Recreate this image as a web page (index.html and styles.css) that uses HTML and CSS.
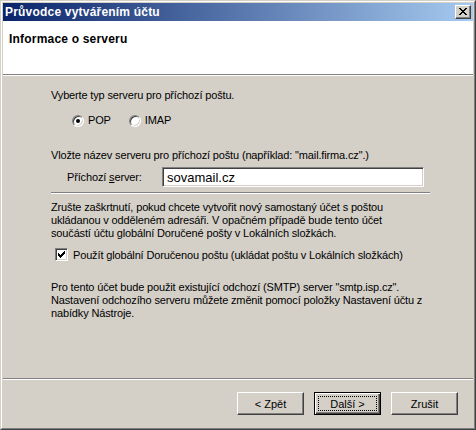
FILE: index.html
```html
<!DOCTYPE html>
<html lang="cs">
  <head>
    <meta charset="UTF-8" />
    <meta name="viewport" content="width=device-width, initial-scale=1.0" />
    <title>Průvodce vytvářením účtu</title>
    <link rel="stylesheet" href="styles.css">
  </head>
  <body>
    <div class="window">
      <div class="frame">
        <div class="titlebar">
          <span class="title">Průvodce vytvářením účtu</span>
          <button class="close" aria-label="Zavřít">
            <svg width="8" height="7" viewBox="0 0 8 7" shape-rendering="crispEdges">
              <path d="M0 0h2v1h-2zM6 0h2v1h-2zM1 1h2v1h-2zM5 1h2v1h-2zM2 2h4v1h-4zM3 3h2v1h-2zM2 4h4v1h-4zM1 5h2v1h-2zM5 5h2v1h-2zM0 6h2v1h-2zM6 6h2v1h-2z" fill="#000"/>
            </svg>
          </button>
        </div>

        <div class="header">
          <h1>Informace o serveru</h1>
        </div>
        <div class="etched"></div>

        <div class="content">
          <p class="line">Vyberte typ serveru pro příchozí poštu.</p>

          <div class="radios">
            <label class="radio">
              <span class="radio-box checked"></span>POP
            </label>
            <label class="radio">
              <span class="radio-box"></span>IMAP
            </label>
          </div>

          <p class="line gap-server">Vložte název serveru pro příchozí poštu (například: "mail.firma.cz".)</p>

          <div class="server-row">
            <label class="server-label" for="server">Příchozí <u>s</u>erver:</label>
            <div class="field"><input id="server" type="text" value="sovamail.cz" /></div>
          </div>

          <div class="etched short"></div>

          <p class="para">Zrušte zaškrtnutí, pokud chcete vytvořit nový samostaný účet s poštou<br>ukládanou v odděleném adresáři. V opačném případě bude tento účet<br>součástí účtu globální Doručené pošty v Lokálních složkách.</p>

          <label class="check">
            <span class="check-box">
              <svg width="7" height="7" viewBox="0 0 7 7" shape-rendering="crispEdges">
                <path d="M6 0h1v3h-1zM5 1h1v3h-1zM4 2h1v3h-1zM3 3h1v3h-1zM2 4h1v3h-1zM1 3h1v3h-1zM0 2h1v3h-1z" fill="#000"/>
              </svg>
            </span>Použít globální Doručenou poštu (ukládat poštu v Lokálních složkách)
          </label>

          <p class="para gap-smtp">Pro tento účet bude použit existující odchozí (SMTP) server "smtp.isp.cz".<br>Nastavení odchozího serveru můžete změnit pomocí položky Nastavení účtu z<br>nabídky Nástroje.</p>
        </div>

        <div class="etched"></div>
        <div class="footer">
          <button class="btn">&lt; Zpět</button>
          <button class="btn default"><span class="focus">Další &gt;</span></button>
          <button class="btn">Zrušit</button>
        </div>
      </div>
    </div>
  </body>
</html>
```

FILE: styles.css
```css
* {
  box-sizing: border-box;
}
body {
  margin: 0;
  width: 476px;
  height: 430px;
  background-color: #d4d0c8;
  font-family: "Liberation Sans", Arial, sans-serif;
  font-size: 11px;
  letter-spacing: -0.15px;
  color: #000;
}
.window {
  width: 476px;
  height: 430px;
  border: 1px solid;
  border-color: #d4d0c8 #404040 #404040 #d4d0c8;
}
.frame {
  height: 100%;
  display: flex;
  flex-direction: column;
  border: 1px solid;
  border-color: #fff #808080 #808080 #fff;
  padding: 1px;
}
.titlebar {
  height: 18px;
  flex: none;
  display: flex;
  align-items: center;
  justify-content: space-between;
  padding: 0 2px 0 2px;
  background: linear-gradient(to right, #0a246a, #a6caf0);
}
.title {
  color: #fff;
  font-weight: bold;
  font-size: 12px;
  letter-spacing: 0.2px;
}
.close {
  width: 16px;
  height: 14px;
  padding: 0;
  display: flex;
  align-items: center;
  justify-content: center;
  background: #d4d0c8;
  border: 1px solid;
  border-color: #fff #404040 #404040 #fff;
  box-shadow: inset -1px -1px 0 #808080;
}
.close svg {
  display: block;
  margin-bottom: 1px;
}
.header {
  height: 53px;
  flex: none;
  background: #fff;
  padding: 12px 0 0 6px;
}
.header h1 {
  margin: 0;
  font-size: 12px;
  line-height: 13px;
  font-weight: bold;
  letter-spacing: 0.2px;
}
.etched {
  height: 2px;
  flex: none;
  border-top: 1px solid #808080;
  border-bottom: 1px solid #fff;
}
.etched.short {
  width: 379px;
  margin-top: 5px;
}
.content {
  flex: 1;
  padding: 13px 0 0 48px;
}
.line,
.para {
  margin: 0;
  line-height: 13px;
  white-space: nowrap;
}
.radios {
  display: flex;
  gap: 18px;
  margin: 12px 0 0 21px;
  height: 13px;
  line-height: 13px;
}
.radio {
  display: flex;
  align-items: center;
  gap: 4px;
}
.radio-box {
  width: 12px;
  height: 12px;
  border-radius: 50%;
  background: #fff;
  border: 1px solid;
  border-color: #808080 #fff #fff #808080;
  box-shadow: inset 1px 1px 0 #404040, inset -1px -1px 0 #d4d0c8;
  display: flex;
  align-items: center;
  justify-content: center;
}
.radio-box.checked::after {
  content: "";
  width: 4px;
  height: 4px;
  border-radius: 50%;
  background: #000;
}
.gap-server {
  margin-top: 22px;
}
.server-row {
  display: flex;
  align-items: center;
  margin-top: 5px;
  height: 20px;
}
.server-label {
  width: 95px;
  margin-left: 16px;
}
.field {
  width: 262px;
  height: 20px;
  border: 1px solid;
  border-color: #808080 #fff #fff #808080;
  box-shadow: inset 1px 1px 0 #404040, inset -1px -1px 0 #d4d0c8;
  background: #fff;
  padding: 2px 2px 1px 4px;
}
.field input {
  width: 100%;
  height: 100%;
  border: none;
  outline: none;
  padding: 0;
  font-family: "Liberation Sans", Arial, sans-serif;
  font-size: 13px;
  color: #000;
  background: transparent;
}
.para {
  margin-top: 7px;
}
.check {
  display: flex;
  align-items: center;
  gap: 5px;
  margin: 8px 0 0 4px;
  height: 13px;
}
.check-box {
  width: 13px;
  height: 13px;
  background: #fff;
  border: 1px solid;
  border-color: #808080 #fff #fff #808080;
  box-shadow: inset 1px 1px 0 #404040, inset -1px -1px 0 #d4d0c8;
  display: flex;
  align-items: center;
  justify-content: center;
}
.gap-smtp {
  margin-top: 20px;
}
.footer {
  height: 47px;
  flex: none;
  display: flex;
  justify-content: flex-end;
  gap: 10px;
  padding: 12px 15px 0 0;
}
.btn {
  width: 67px;
  height: 23px;
  padding: 0;
  font-family: "Liberation Sans", Arial, sans-serif;
  font-size: 11px;
  color: #000;
  background: #d4d0c8;
  border: 1px solid;
  border-color: #fff #404040 #404040 #fff;
  box-shadow: inset -1px -1px 0 #808080;
}
.btn.default {
  border: 1px solid #000;
  box-shadow: inset 1px 1px 0 #fff, inset -1px -1px 0 #404040, inset -2px -2px 0 #808080;
  padding: 3px;
}
.focus {
  display: flex;
  align-items: center;
  justify-content: center;
  height: 100%;
  border: 1px dotted #000;
}
```
